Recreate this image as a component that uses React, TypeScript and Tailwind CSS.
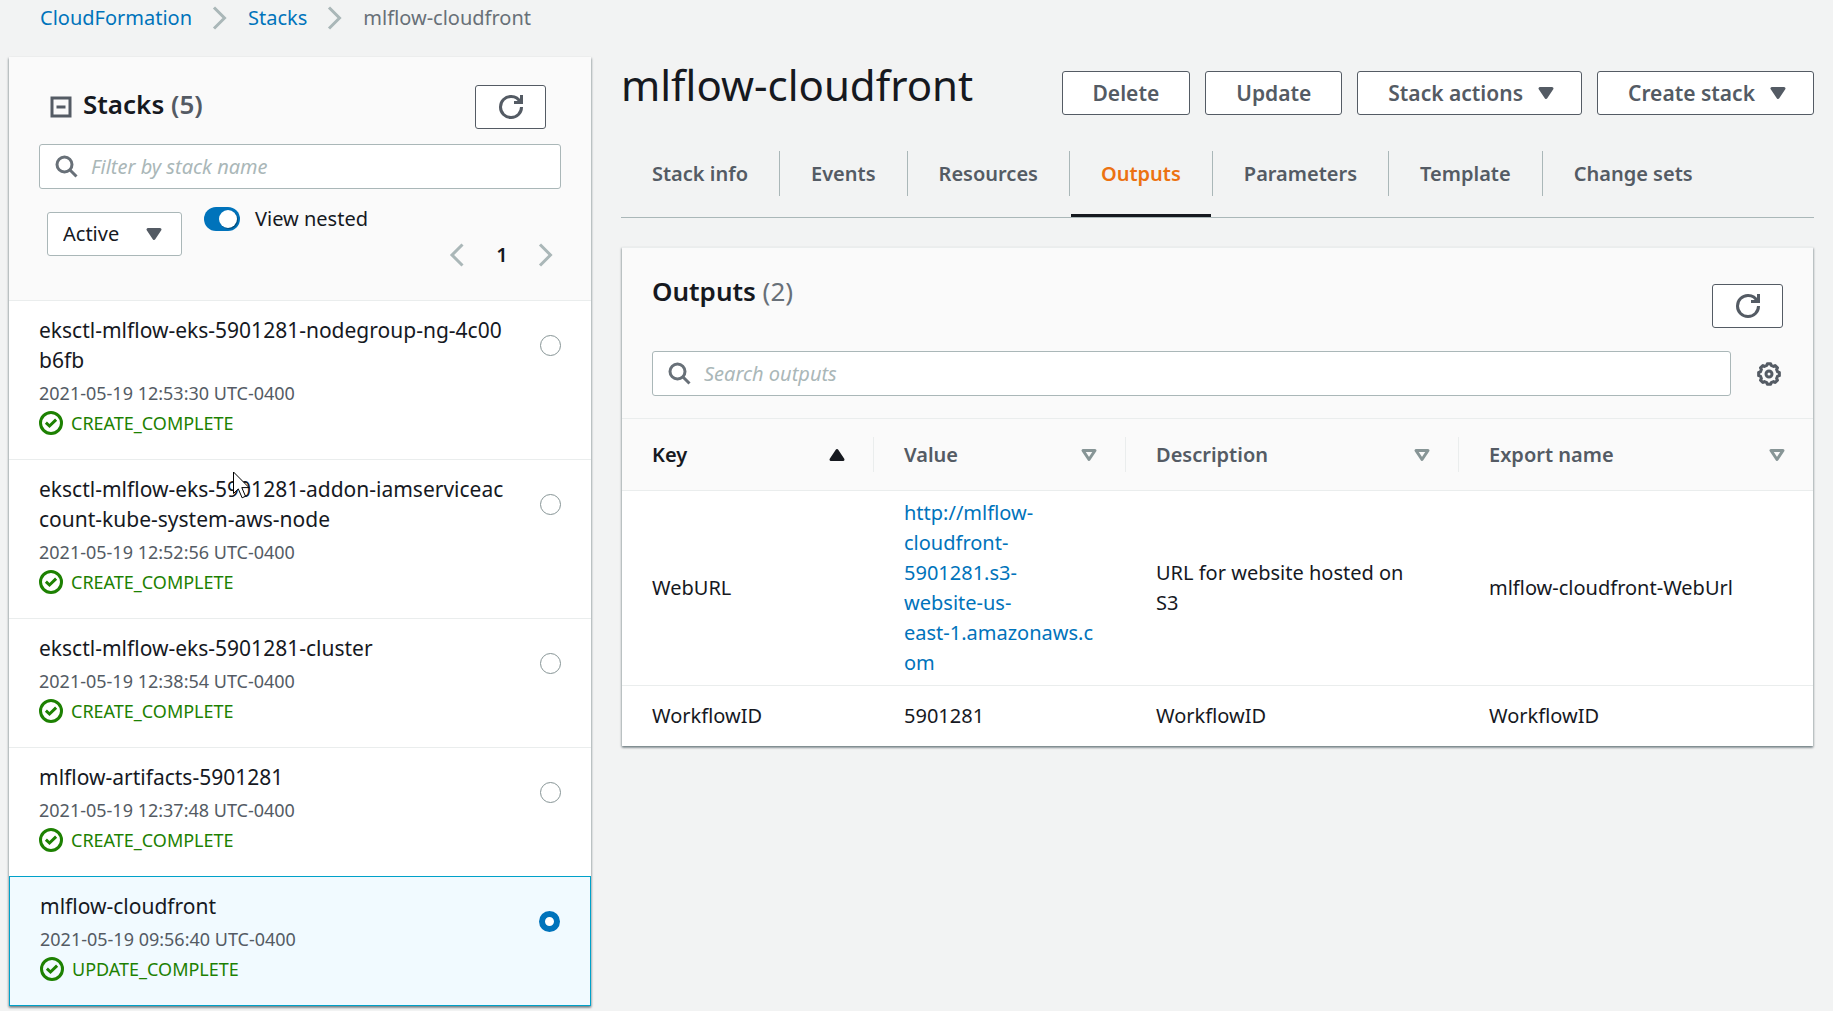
import type { ReactNode } from "react";

function Icon({ children, className = "" }: { children: ReactNode; className?: string }) {
  return (
    <svg
      viewBox="0 0 16 16"
      aria-hidden="true"
      fill="none"
      stroke="currentColor"
      strokeWidth={2}
      className={"size-6 shrink-0 " + className}
    >
      {children}
    </svg>
  );
}

const CaretDown = ({ className = "" }: { className?: string }) => (
  <Icon className={className}>
    <path d="M4 5h8l-4 6-4-6z" fill="currentColor" strokeLinejoin="round" />
  </Icon>
);

const CaretDownOutline = () => (
  <Icon className="text-[#879596]">
    <path d="M4 5h8l-4 6-4-6z" strokeLinejoin="round" />
  </Icon>
);

const CaretUp = () => (
  <Icon>
    <path d="M4 11h8L8 5l-4 6z" fill="currentColor" strokeLinejoin="round" />
  </Icon>
);

const ChevronRight = () => (
  <Icon className="text-[#aab7b8]">
    <path d="M4 1l7 7-7 7" />
  </Icon>
);

const ChevronLeft = () => (
  <Icon className="text-[#aab7b8]">
    <path d="M11 1L4 8l7 7" />
  </Icon>
);

const SearchIcon = () => (
  <Icon className="pointer-events-none absolute left-[15px] top-[10px] text-[#687078]">
    <circle cx="7" cy="7" r="5" />
    <path d="M15 15l-4.5-4.5" />
  </Icon>
);

const RefreshIcon = () => (
  <Icon>
    <path d="M10 5h5V0" />
    <path d="M15 8a6.957 6.957 0 0 1-7 7 6.957 6.957 0 0 1-7-7 6.957 6.957 0 0 1 7-7 6.87 6.87 0 0 1 6.3 4" />
  </Icon>
);

const gearOutline = (() => {
  const points: string[] = [];
  for (let tooth = 0; tooth < 8; tooth++) {
    for (const [offset, radius] of [[-14, 5.9], [-9, 7], [9, 7], [14, 5.9]]) {
      const angle = ((tooth * 45 + offset) * Math.PI) / 180;
      points.push((8 + radius * Math.cos(angle)).toFixed(2) + " " + (8 + radius * Math.sin(angle)).toFixed(2));
    }
  }
  return "M" + points.join("L") + "z";
})();

const GearIcon = () => (
  <Icon>
    <path d={gearOutline} strokeLinejoin="round" />
    <circle cx="8" cy="8" r="2" />
  </Icon>
);

const SuccessIcon = () => (
  <Icon>
    <circle cx="8" cy="8" r="7" />
    <path d="M4.6 7.8L7 10l4.4-4.2" />
  </Icon>
);

const Pointer = () => (
  <svg
    viewBox="0 0 18 28"
    aria-hidden="true"
    className="pointer-events-none absolute left-[233px] top-[471px] h-7 w-[18px]"
  >
    <path
      d="M.5 1v21.5l4.8-4.6 3.8 8.9 3.4-1.5-3.7-8.7h7.2z"
      fill="#fff"
      stroke="#000"
      strokeWidth="1"
    />
  </svg>
);

function RefreshButton({ label, className }: { label: string; className: string }) {
  return (
    <button
      type="button"
      aria-label={label}
      className={
        "flex h-11 w-[71px] shrink-0 items-center justify-center rounded-[3px] border border-[#545b64] bg-white text-[#545b64] " +
        className
      }
    >
      <RefreshIcon />
    </button>
  );
}

function SearchField({ label }: { label: string }) {
  return (
    <div className="relative flex-1">
      <SearchIcon />
      <input
        type="search"
        aria-label={label}
        placeholder={label}
        className="block h-[45px] w-full rounded-[3px] border border-[#aab7b8] bg-white pl-[51px] pr-4 placeholder:italic placeholder:text-[#aab7b8]"
      />
    </div>
  );
}

type Stack = { name: string; date: string; status: string; selected?: boolean };

const stacks: Stack[] = [
  { name: "eksctl-mlflow-eks-5901281-nodegroup-ng-4c00b6fb", date: "2021-05-19 12:53:30 UTC-0400", status: "CREATE_COMPLETE" },
  { name: "eksctl-mlflow-eks-5901281-addon-iamserviceaccount-kube-system-aws-node", date: "2021-05-19 12:52:56 UTC-0400", status: "CREATE_COMPLETE" },
  { name: "eksctl-mlflow-eks-5901281-cluster", date: "2021-05-19 12:38:54 UTC-0400", status: "CREATE_COMPLETE" },
  { name: "mlflow-artifacts-5901281", date: "2021-05-19 12:37:48 UTC-0400", status: "CREATE_COMPLETE" },
  { name: "mlflow-cloudfront", date: "2021-05-19 09:56:40 UTC-0400", status: "UPDATE_COMPLETE", selected: true },
];

function StackItem({ stack }: { stack: Stack }) {
  return (
    <li
      className={
        stack.selected
          ? "border border-[#00a1c9] bg-[#f1faff]"
          : "border-t border-[#eaeded] bg-white"
      }
    >
      <label className="flex items-start justify-between px-[30px] pb-[21px] pt-[14px]">
        <span className="flex w-[472px] flex-col">
          <span className="break-all text-[21px] leading-[30px]">{stack.name}</span>
          <span className="mt-[3px] text-lg leading-[30px] text-[#545b64]">{stack.date}</span>
          <span className="flex items-center gap-2 text-lg leading-[30px] text-[#1d8102]">
            <SuccessIcon />
            {stack.status}
          </span>
        </span>
        <input
          type="radio"
          name="stack"
          defaultChecked={stack.selected}
          className="mt-5 size-[21px] shrink-0 appearance-none rounded-full border border-[#879596] bg-white checked:border-[6px] checked:border-[#0073bb]"
        />
      </label>
    </li>
  );
}

const tabs = ["Stack info", "Events", "Resources", "Outputs", "Parameters", "Template", "Change sets"];

const columns = [
  { label: "Key", width: "w-[252px]" },
  { label: "Value", width: "w-[252px]" },
  { label: "Description", width: "w-[333px]" },
  { label: "Export name", width: "" },
];

const websiteUrlParts = [
  "http://mlflow-",
  "cloudfront-",
  "5901281.s3-",
  "website-us-",
  "east-1.amazonaws.c",
  "om",
];

const cardShadow =
  "shadow-[0_2px_2px_0_rgba(0,28,36,0.3),1px_1px_2px_0_rgba(0,28,36,0.2),-1px_1px_2px_0_rgba(0,28,36,0.2)]";

const actionButton =
  "flex h-11 items-center gap-[11px] whitespace-nowrap rounded-[3px] border border-[#545b64] bg-white text-[21px] font-semibold text-[#545b64]";

export default function App() {
  return (
    <div className="relative min-h-screen bg-[#f2f3f3] font-['Noto_Sans',sans-serif] text-[20px] leading-[30px] text-[#16191f]">
      <nav aria-label="Breadcrumb" className="pl-10">
        <ol className="flex h-9 items-center gap-4">
          <li><a href="#services" className="text-[#0073bb]">CloudFormation</a></li>
          <li><ChevronRight /></li>
          <li><a href="#stacks" className="text-[#0073bb]">Stacks</a></li>
          <li><ChevronRight /></li>
          <li aria-current="page" className="text-[#687078]">mlflow-cloudfront</li>
        </ol>
      </nav>

      <div className="flex items-start gap-[30px] pb-2 pl-[9px] pr-[19px] pt-[21px]">
        <aside className={"w-[582px] shrink-0 bg-[#fafafa] " + cardShadow}>
          <div className="px-[30px] pb-[23px] pt-7">
            <div className="flex items-start">
              <button type="button" aria-label="Collapse stacks" className="ml-[10px] mt-[10px] text-[#545b64]">
                <Icon>
                  <path d="M2 2h12v12H2zM5 8h6" />
                </Icon>
              </button>
              <h2 className="ml-[10px] mt-px text-[26px] font-semibold leading-9">
                Stacks <span className="text-[#545b64]">(5)</span>
              </h2>
              <RefreshButton label="Refresh stacks" className="ml-auto mr-[15px]" />
            </div>
            <div className="mt-[15px] flex">
              <SearchField label="Filter by stack name" />
            </div>
            <div className="mt-[18px] flex items-start">
              <div className="relative ml-2 mt-[5px]">
                <select
                  aria-label="Stack status"
                  className="block h-11 w-[135px] appearance-none rounded-[3px] border border-[#aab7b8] bg-white pl-[15px]"
                >
                  <option>Active</option>
                </select>
                <CaretDown className="pointer-events-none absolute right-4 top-[10px] text-[#545b64]" />
              </div>
              <label className="ml-[22px] flex h-6 items-center gap-[15px]">
                <input
                  type="checkbox"
                  role="switch"
                  defaultChecked
                  className="flex h-6 w-9 appearance-none items-center rounded-full bg-[#0073bb] pl-[15px] before:size-[18px] before:rounded-full before:bg-white before:shadow-[1px_1px_1px_rgba(0,0,0,0.35)]"
                />
                View nested
              </label>
              <div className="ml-auto mt-[26px] flex h-11 items-center pr-[3px]">
                <button type="button" aria-label="Previous page"><ChevronLeft /></button>
                <span className="w-16 text-center font-semibold">1</span>
                <button type="button" aria-label="Next page"><ChevronRight /></button>
              </div>
            </div>
          </div>
          <ul>
            {stacks.map((stack) => (
              <StackItem key={stack.name} stack={stack} />
            ))}
          </ul>
        </aside>

        <main className="min-w-0 flex-1">
          <header className="flex items-start justify-between">
            <h1 className="text-[42px] leading-[56px]">mlflow-cloudfront</h1>
            <div className="mt-[14px] flex gap-[15px]">
              <button type="button" className={actionButton + " px-[30px]"}>Delete</button>
              <button type="button" className={actionButton + " px-[30px]"}>Update</button>
              <button type="button" className={actionButton + " pl-[30px] pr-[23px]"}>
                Stack actions
                <CaretDown />
              </button>
              <button type="button" className={actionButton + " pl-[30px] pr-[23px]"}>
                Create stack
                <CaretDown />
              </button>
            </div>
          </header>

          <nav aria-label="Stack details" className="mt-9 border-b border-[#aab7b8]">
            <ul className="flex">
              {tabs.map((tab, index) => (
                <li key={tab} className="flex items-start">
                  <a
                    href={"#" + tab.toLowerCase().replace(" ", "-")}
                    className={
                      "mx-px block h-[66px] border-b-[3px] px-[30px] font-semibold leading-[45px] " +
                      (tab === "Outputs" ? "border-[#16191f] text-[#ec7211]" : "border-transparent text-[#545b64]")
                    }
                  >
                    {tab}
                  </a>
                  {index < tabs.length - 1 && <span className="h-[45px] w-px bg-[#aab7b8]" />}
                </li>
              ))}
            </ul>
          </nav>

          <section className={"mx-px mt-[29px] border-t border-[#eaeded] bg-[#fafafa] " + cardShadow}>
            <div className="px-[30px] pb-[22px] pt-[25px]">
              <div className="flex items-start justify-between">
                <h2 className="text-[26px] font-semibold leading-9">
                  Outputs <span className="font-normal text-[#687078]">(2)</span>
                </h2>
                <RefreshButton label="Refresh outputs" className="mt-[11px]" />
              </div>
              <div className="mt-[23px] flex items-center gap-6">
                <SearchField label="Search outputs" />
                <button type="button" aria-label="Preferences" className="flex w-7 justify-center text-[#545b64]">
                  <GearIcon />
                </button>
              </div>
            </div>
            <table className="w-full table-fixed border-t border-[#eaeded] text-left">
              <thead>
                <tr className="border-b border-[#eaeded]">
                  {columns.map((column, index) => (
                    <th key={column.label} scope="col" className={"px-0 py-[18px] font-semibold " + column.width}>
                      <button
                        type="button"
                        className={
                          "flex h-[35px] w-full items-center justify-between pl-[30px] pr-6 " +
                          (index === 0 ? "text-[#16191f] " : "text-[#545b64] ") +
                          (index < 3 ? "border-r border-[#eaeded]" : "")
                        }
                      >
                        {column.label}
                        {index === 0 ? <CaretUp /> : <CaretDownOutline />}
                      </button>
                    </th>
                  ))}
                </tr>
              </thead>
              <tbody className="bg-white">
                <tr className="border-b border-[#eaeded]">
                  <td className="py-[7px] pl-[30px] pr-6">WebURL</td>
                  <td className="py-[7px] pl-[30px] pr-3">
                    <a href="#website" className="text-[#0073bb]">
                      {websiteUrlParts.map((part) => (
                        <span key={part} className="block">{part}</span>
                      ))}
                    </a>
                  </td>
                  <td className="py-[7px] pl-[30px] pr-[50px]">URL for website hosted on S3</td>
                  <td className="py-[7px] pl-[30px] pr-6">mlflow-cloudfront-WebUrl</td>
                </tr>
                <tr>
                  <td className="py-[15px] pl-[30px] pr-6">WorkflowID</td>
                  <td className="py-[15px] pl-[30px] pr-6">5901281</td>
                  <td className="py-[15px] pl-[30px] pr-6">WorkflowID</td>
                  <td className="py-[15px] pl-[30px] pr-6">WorkflowID</td>
                </tr>
              </tbody>
            </table>
          </section>
        </main>
      </div>
      <Pointer />
    </div>
  );
}
